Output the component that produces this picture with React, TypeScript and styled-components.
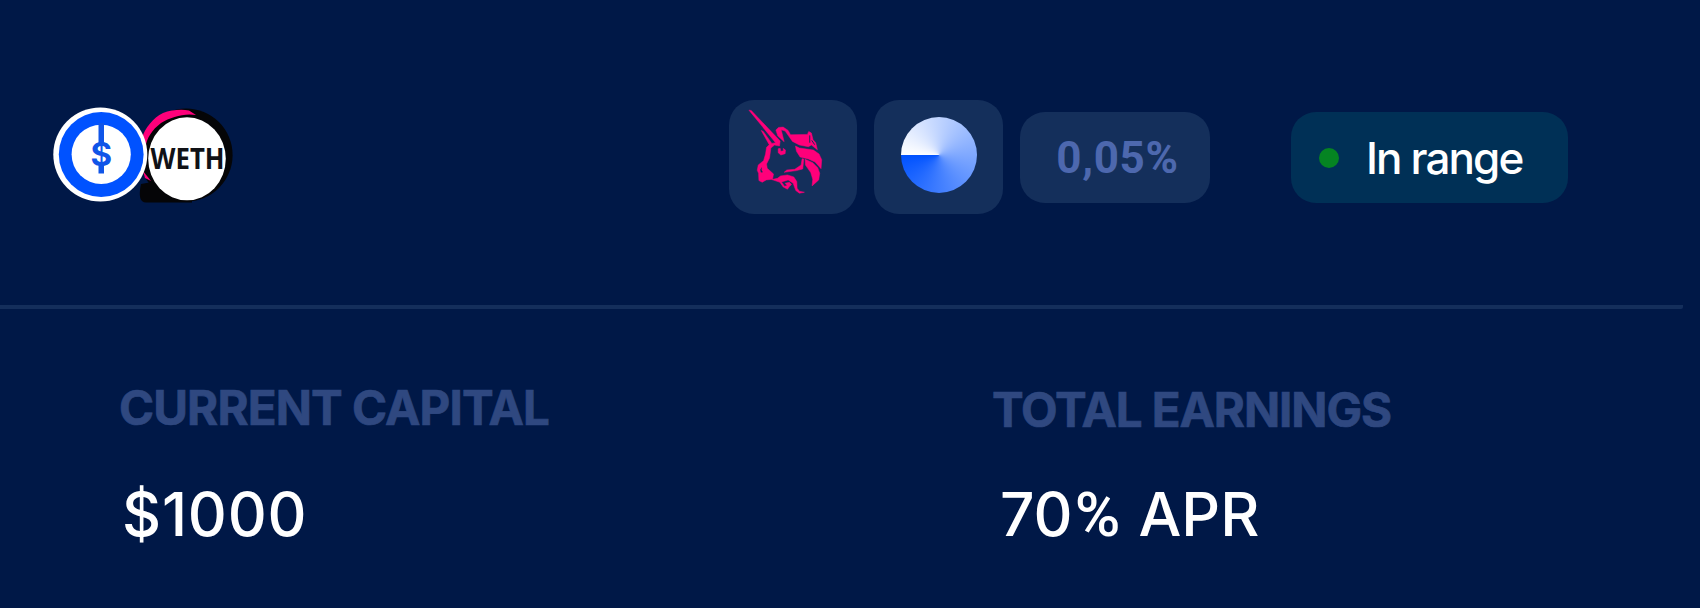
import styled, { createGlobalStyle } from "styled-components";

const GlobalStyle = createGlobalStyle`
  body {
    margin: 0;
    background: #001847;
  }
`;

const Card = styled.main`
  width: 1700px;
  height: 608px;
  overflow: hidden;
  background: #001847;
  font-family: "Inter", sans-serif;
`;

const Header = styled.header`
  display: flex;
  align-items: flex-start;
  box-sizing: border-box;
  width: 1683px;
  height: 309px;
  padding: 100px 115px 0 53px;
  border-bottom: 4px solid #142e5b;
  border-radius: 0 0 2px 0;
`;

const Pair = styled.div`
  display: flex;
  margin: 7px auto 0 0;
`;

const Badges = styled.div`
  display: flex;
  align-items: center;
  gap: 17px;
`;

const Tile = styled.div`
  display: flex;
  align-items: center;
  justify-content: center;
  width: 128.6px;
  height: 114px;
  border-radius: 25px;
  background: #142f5b;
`;

const Disc = styled.div`
  width: 76px;
  height: 76px;
  margin-bottom: 4px;
  border-radius: 50%;
  background: conic-gradient(from 270deg, #fff, #0052ff);
`;

const Fee = styled.div`
  display: flex;
  align-items: center;
  justify-content: center;
  box-sizing: border-box;
  width: 190px;
  height: 91px;
  padding: 2px 0 0 5px;
  border-radius: 25px;
  background: #142f5b;
  color: #4d68ae;
  font: 700 44px/1 "Roboto", sans-serif;
  letter-spacing: 0.7px;
`;

const Status = styled.div`
  display: flex;
  align-items: center;
  gap: 27px;
  box-sizing: border-box;
  width: 277px;
  height: 91px;
  margin: 12px 0 0 81px;
  padding-left: 28px;
  border-radius: 25px;
  background: #003056;
  color: #fff;
  font-size: 44px;
  font-weight: 500;
  line-height: 1;
  letter-spacing: -1.9px;
  white-space: nowrap;
`;

const Dot = styled.span`
  width: 20px;
  height: 20px;
  border-radius: 50%;
  background: #058422;
`;

const Stats = styled.section`
  display: grid;
  grid-template-columns: 873px 1fr;
  padding: 75px 0 0 119px;
`;

const Stat = styled.div`
  display: flex;
  flex-direction: column;
`;

const Label = styled.h2<{ $drop?: number; $spacing: number }>`
  height: 95px;
  margin: 0;
  padding-top: ${({ $drop = 0 }) => $drop}px;
  box-sizing: border-box;
  color: #2f4880;
  font-size: 47.5px;
  font-weight: 700;
  line-height: 48px;
  letter-spacing: ${({ $spacing }) => $spacing}px;
  -webkit-text-stroke: 0.7px #2f4880;
`;

const Value = styled.p<{ $indent: number; $spacing?: number }>`
  margin: 0;
  padding: 5px 0 0 ${({ $indent }) => $indent}px;
  color: #fff;
  font-size: 60.5px;
  font-weight: 500;
  line-height: 60px;
  letter-spacing: ${({ $spacing = 0 }) => $spacing}px;
`;

const Percent = styled.span`
  margin: 0 2px 0 2px;
  font-family: "Roboto", sans-serif;
  font-size: 62px;
  font-weight: 500;
`;

const TokenPair = () => (
  <svg width="181" height="96" viewBox="53 107 181 96">
    <circle cx="186" cy="155" r="46.6" fill="#050507" />
    <path d="M141 184 Q137 202.5 146 202.5 H192 V175Z" fill="#050507" />
    <path d="M142 138 C145 128 153 118 163 113 C171 110 181 109 189 110.5 L196 115 C184 113 171 117 161 123 C152 130 147 137 145 149 L141 149Z" fill="#ff007a" />
    <path d="M143 171 L151 181 L145 178Z" fill="#ff007a" />
    <ellipse cx="187" cy="158.8" rx="38.8" ry="41.5" fill="#fff" />
    <text x="150.5" y="169.2" textLength="74" lengthAdjust="spacingAndGlyphs" fontFamily="Noto Sans, sans-serif" fontSize="28" fontWeight="700" fill="#101116">
      WETH
    </text>
    <circle cx="100.3" cy="154.5" r="47" fill="#fff" />
    <circle cx="101.2" cy="154.5" r="42.4" fill="#0052ff" />
    <circle cx="101.2" cy="154.3" r="29.6" fill="#fff" />
    <path d="M98.500 123 H104 V143 H98.500Z" fill="#1055e8" />
    <path d="M98.500 163 H104 V173.500 H98.500Z" fill="#1055e8" />
    <text x="101.2" y="165.7" textAnchor="middle" fontFamily="Inter, sans-serif" fontSize="33" fontWeight="700" fill="#1055e8">
      $
    </text>
  </svg>
);

const Unicorn = () => (
  <svg width="129" height="114" viewBox="27 30 387 342" fill="#ff007a">
    <g stroke="#ff007a" strokeWidth="1.5">
      <path d="M87 60 L94 61 L181 153 L179 168 L164 165 L153 174 L149 204 L140 222 L142 235 L161 252 L158 268 L139 270 L127 277 L117 272 L116 250 L112 241 L115 225 L131 212 L137 192 L140 172 L148 164 L124 121 L130 124 L156 160 L167 158 Z" />
      <path d="M168 120 L176 112 L190 111 L205 121 L212 134 L263 133 L267 124 L275 129 L280 149 L288 158 L293 179 L275 165 L266 170 L239 165 L218 154 L196 123 L184 119 L193 155 L174 138 Z" />
      <path d="M227 168 L239 174 L281 180 L298 192 L306 209 L304 236 L286 216 L266 207 L241 201 L230 184 Z" />
      <path d="M256 208 L279 218 L294 233 L300 250 L297 270 L277 288 L279 268 L273 248 L257 225 Z" />
      <path d="M175 176 L181 175 L183 184 L191 182 L190 175 L197 180 L196 191 L183 195 L175 188 Z" />
      <path d="M247 206 L252 207 L249 237 L230 242 L193 247 L201 240 L225 238 L244 225 Z" />
      <path d="M156 269 L173 265 L182 258 L203 255 L222 261 L231 275 L232 295 L239 304 L254 307 L239 310 L228 302 L220 280 L205 270 L185 276 L194 289 L202 287 L196 280 L209 277 L215 284 L209 290 L203 298 L190 291 L180 277 Z" />
    </g>
    <path d="M126 231 L121 239 L123 248 L129 247 L125 240Z" fill="#142f5b" />
    <path d="M270 136 V158 M276 151 L285 164" stroke="#142f5b" strokeWidth="3" />
  </svg>
);

const App = () => (
  <>
    <GlobalStyle />
    <Card>
      <Header>
        <Pair>
          <TokenPair />
        </Pair>
        <Badges>
          <Tile>
            <Unicorn />
          </Tile>
          <Tile>
            <Disc />
          </Tile>
          <Fee>0,05%</Fee>
        </Badges>
        <Status>
          <Dot />
          In range
        </Status>
      </Header>
      <Stats>
        <Stat>
          <Label $spacing={-0.9}>CURRENT CAPITAL</Label>
          <Value $indent={3} $spacing={0.8}>
            $1000
          </Value>
        </Stat>
        <Stat>
          <Label $drop={2} $spacing={-1.1}>
            TOTAL EARNINGS
          </Label>
          <Value $indent={8}>
            70<Percent>%</Percent> APR
          </Value>
        </Stat>
      </Stats>
    </Card>
  </>
);

export default App;
